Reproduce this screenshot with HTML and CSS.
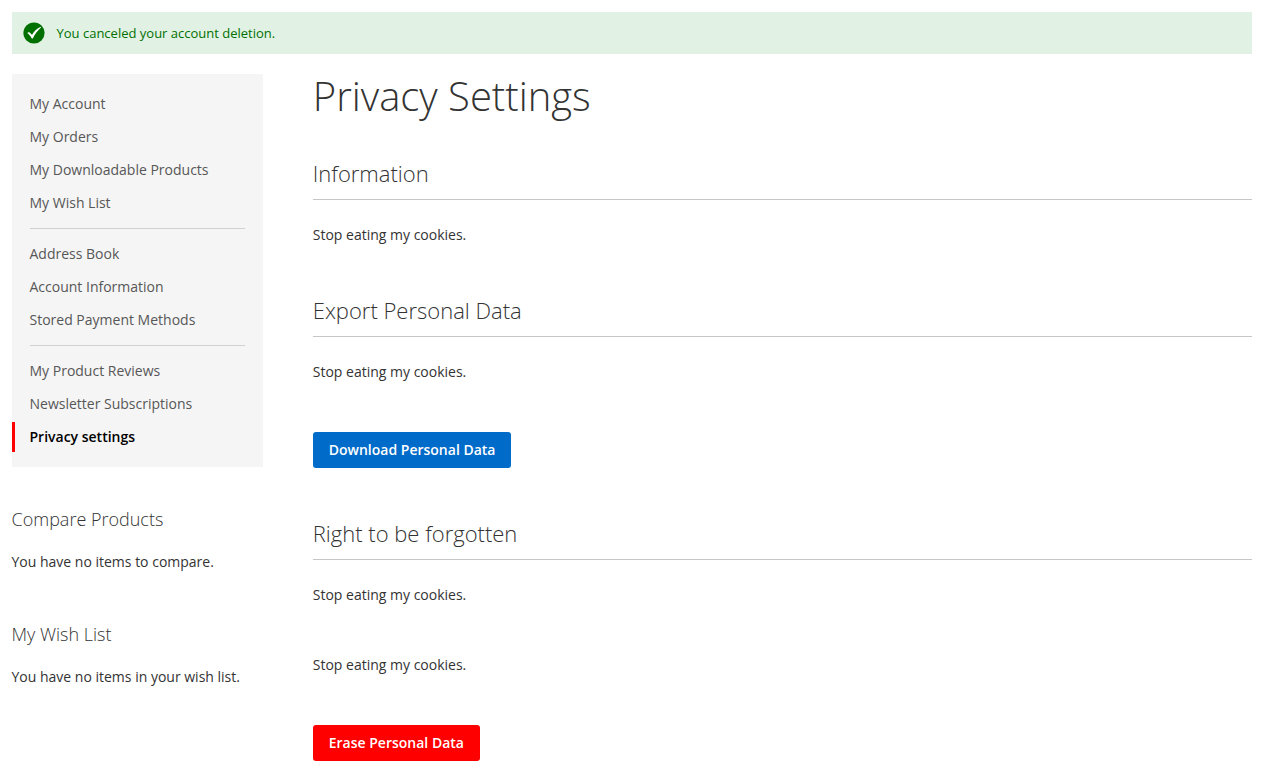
FILE: index.html
```html
<!DOCTYPE html>
<html lang="en">
<head>
<meta charset="utf-8">
<title>Privacy Settings</title>
<link rel="stylesheet" href="styles.css">
</head>
<body>
<div class="message" role="status">
  <svg class="message-icon" viewBox="0 0 22 22" aria-hidden="true"><circle cx="11" cy="11" r="10.6" fill="#007000"/><path d="M4.2 11.1 6 9.9 9 12.8C11.2 9.2 14 6.4 17.7 4.7L18 5.5C14.4 8.6 12 12 9.8 16.5H8.8C7.4 14.2 6 12.5 4.2 11.1Z" fill="#fff"/></svg>
  <span>You canceled your account deletion.</span>
</div>
<div class="columns">
  <aside class="sidebar">
    <nav class="nav">
      <a>My Account</a>
      <a>My Orders</a>
      <a>My Downloadable Products</a>
      <a>My Wish List</a>
      <hr>
      <a>Address Book</a>
      <a>Account Information</a>
      <a>Stored Payment Methods</a>
      <hr>
      <a>My Product Reviews</a>
      <a>Newsletter Subscriptions</a>
      <a class="current">Privacy settings</a>
    </nav>
    <section class="side-block">
      <h3>Compare Products</h3>
      <p>You have no items to compare.</p>
    </section>
    <section class="side-block">
      <h3>My Wish List</h3>
      <p>You have no items in your wish list.</p>
    </section>
  </aside>
  <main class="main">
    <h1>Privacy Settings</h1>
    <section class="block">
      <h2>Information</h2>
      <p>Stop eating my cookies.</p>
    </section>
    <section class="block">
      <h2>Export Personal Data</h2>
      <p>Stop eating my cookies.</p>
      <button class="button">Download Personal Data</button>
    </section>
    <section class="block">
      <h2>Right to be forgotten</h2>
      <p>Stop eating my cookies.</p>
      <p class="extra">Stop eating my cookies.</p>
      <button class="button danger">Erase Personal Data</button>
    </section>
  </main>
</div>
</body>
</html>
```
FILE: styles.css
```css
* { box-sizing: border-box; }
html { overflow: hidden; }
body { margin: 0; padding: 12px 10px 0 11.5px; background: #fff; color: #333; font: 400 14px/20px "Open Sans", sans-serif; }
h1, h2, h3, p { margin: 0; }
.message { display: flex; align-items: center; gap: 12px; height: 42px; padding: 0 11px; background: #e1f2e4; color: #007000; font-size: 13px; }
.message-icon { width: 22px; height: 22px; }
.columns { display: flex; gap: 50.25px; margin-top: 20px; }
.sidebar { width: 251px; flex: none; }
.nav { height: 393px; padding: 15px 0; background: #f5f5f5; }
.nav a { display: block; height: 30px; margin-bottom: 3px; padding: 5px 18px; color: #575757; line-height: 20px; }
.nav hr { height: 1px; margin: 10px 18px; border: 0; background: #d1d1d1; }
.nav .current { padding-left: 15px; border-left: 3px solid #f00; color: #000; font-weight: 600; }
.side-block { height: 115px; padding-top: 42px; }
.side-block h3 { font-size: 18px; font-weight: 300; line-height: 20px; }
.side-block p { margin-top: 23px; }
.main { flex: 1; }
h1 { font-size: 40px; font-weight: 300; line-height: 44px; }
.block { padding-top: 42px; }
.block + .block { padding-top: 52px; }
.block h2 { height: 40px; border-bottom: 1px solid #c6c6c6; font-size: 22px; font-weight: 300; line-height: 26px; }
.block p { margin-top: 25px; }
.block .extra { margin-top: 50px; }
.button { display: block; height: 36px; margin-top: 50px; padding: 0 16px; border: 0; border-radius: 3px; background: #006bc9; color: #fff; font: 600 14px/20px "Open Sans", sans-serif; }
.danger { background: #f00; }
```
